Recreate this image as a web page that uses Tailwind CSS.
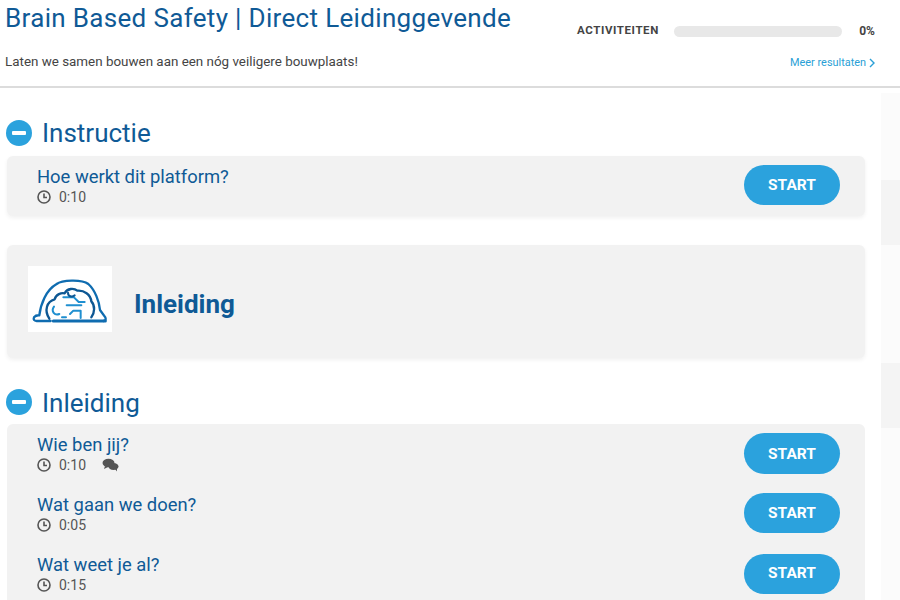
<!DOCTYPE html>
<html lang="nl">
<head>
    <meta charset="utf-8">
    <script src="https://cdn.jsdelivr.net/npm/@tailwindcss/browser@4"></script>
    <title>Brain Based Safety</title>
</head>
<body class="bg-white font-['Roboto',sans-serif] w-[900px] h-[600px] overflow-hidden">

    <!-- header -->
    <header class="h-[88px] flex justify-between border-b-2 border-[#dcdcdc] pl-[5px] pr-[25px]">
        <div>
            <h1 class="text-[26px] leading-[36px] text-[#0f5a96] tracking-[0.33px]">Brain Based Safety | Direct Leidinggevende</h1>
            <p class="mt-[17px] text-[13.4px] leading-[18px] text-[#444]">Laten we samen bouwen aan een nóg veiligere bouwplaats!</p>
        </div>
        <div class="w-[298px] pt-[24px]">
            <div class="flex items-center h-[14px]">
                <span class="text-[11.5px] font-bold text-[#444] w-[97px] tracking-[0.6px]">ACTIVITEITEN</span>
                <div class="w-[168px] h-[11px] rounded-full bg-[#e8e8e8]"></div>
                <span class="ml-auto text-[12px] font-bold text-[#444]">0%</span>
            </div>
            <a class="mt-[18px] flex items-center justify-end gap-[3px] text-[10.9px] leading-[14px] text-[#2a9fd6]">Meer resultaten
                <svg class="w-[6px] h-[10px]" viewBox="0 0 6 10" fill="none" stroke="#2a9fd6" stroke-width="1.4"><path d="M1 1l4 4-4 4"/></svg>
            </a>
        </div>
    </header>

    <div class="flex h-[512px]">
        <main class="w-[881px] pl-[7px] pr-[16px]">

            <!-- instructie -->
            <div class="mt-[30px] h-[30px] flex items-center gap-[10px]">
                <span class="-ml-[1px] w-[26px] h-[26px] rounded-full bg-[#2ba2dd] flex items-center justify-center"><span class="w-[14px] h-[4px] bg-white rounded-[1px]"></span></span>
                <h2 class="text-[26px] leading-[30px] text-[#0f5a96]">Instructie</h2>
            </div>
            <div class="mt-[8px] h-[60px] bg-[#f2f2f2] rounded-md shadow-[0_2px_4px_rgba(0,0,0,0.06)] flex items-center justify-between pl-[30px] pr-[25px]">
                <div>
                    <div class="text-[18.4px] leading-[21px] text-[#0f5a96]">Hoe werkt dit platform?</div>
                    <div class="mt-[1px] flex items-center gap-[8px] text-[14px] leading-[18px] text-[#555]">
                        <svg class="w-[14px] h-[14px]" viewBox="0 0 14 14" fill="none" stroke="#555" stroke-width="1.6"><circle cx="7" cy="7" r="6"/><path d="M7 3.5V7.5H10"/></svg>
                        <span>0:10</span>
                    </div>
                </div>
                <button class="-mt-[2px] pt-[2px] w-[96px] h-[40px] rounded-full bg-[#2ba2dd] text-white text-[15.5px] font-bold">START</button>
            </div>

            <!-- inleiding banner -->
            <div class="mt-[29px] h-[113px] bg-[#f2f2f2] rounded-md shadow-[0_2px_4px_rgba(0,0,0,0.06)] flex items-center pl-[21px] pb-[5px]">
                <div class="w-[84px] h-[66px] bg-white">
                    <svg class="w-[84px] h-[66px]" viewBox="24 18 252 198" fill="none" stroke-linecap="round" stroke-linejoin="round">
                        <path d="M92 183 H50 Q38 182 42 172 Q48 165 58 166 C62 132 78 90 110 72 C125 60 185 57 205 72 C225 90 238 125 240 150 L256 172 Q260 182 250 183" stroke="#0f6cb0" stroke-width="7"/>
                        <path d="M100 183 H256" stroke="#0f6cb0" stroke-width="9"/>
                        <path d="M88 176 C72 152 80 124 104 118 C108 102 124 98 134 100 C142 84 162 84 172 92 C192 90 212 104 214 124 C226 136 224 160 214 172" stroke="#0d5793" stroke-width="7"/>
                        <path d="M102 140 C92 154 104 168 118 162 M130 112 H162 L176 126 H194 M140 136 H184 M150 162 L160 152 H182 V174 M126 172 H138" stroke="#1f8fd0" stroke-width="6"/>
                        <path d="M144 98 C144 110 156 112 164 106" stroke="#0d5793" stroke-width="6"/>
                    </svg>
                </div>
                <h3 class="ml-[22px] mt-[11px] text-[26px] font-bold text-[#0f5a96]">Inleiding</h3>
            </div>

            <!-- inleiding lijst -->
            <div class="mt-[30px] h-[30px] flex items-center gap-[10px]">
                <span class="-ml-[1px] -mt-[2px] w-[26px] h-[26px] rounded-full bg-[#2ba2dd] flex items-center justify-center"><span class="w-[14px] h-[4px] bg-white rounded-[1px]"></span></span>
                <h2 class="text-[26px] leading-[30px] text-[#0f5a96]">Inleiding</h2>
            </div>
            <div class="mt-[6px] h-[176px] bg-[#f2f2f2] rounded-t-md pl-[30px] pr-[25px]">
                <div class="h-[60px] flex items-center justify-between">
                    <div>
                        <div class="text-[18.4px] leading-[21px] text-[#0f5a96]">Wie ben jij?</div>
                        <div class="mt-[1px] flex items-center gap-[8px] text-[14px] leading-[18px] text-[#555]">
                            <svg class="w-[14px] h-[14px]" viewBox="0 0 14 14" fill="none" stroke="#555" stroke-width="1.6"><circle cx="7" cy="7" r="6"/><path d="M7 3.5V7.5H10"/></svg>
                            <span>0:10</span>
                            <svg class="ml-[8px] w-[17px] h-[14px]" viewBox="0 0 17 14" fill="#555"><ellipse cx="6.5" cy="5" rx="6" ry="4.2"/><path d="M3 8l-1 3 4-2z"/><ellipse cx="11.5" cy="8.5" rx="5" ry="3.5"/><path d="M13 11l2 2.5 0-4z"/></svg>
                        </div>
                    </div>
                    <button class="-mt-[1px] pt-[2px] w-[96px] h-[41px] rounded-full bg-[#2ba2dd] text-white text-[15.5px] font-bold">START</button>
                </div>
                <div class="h-[60px] flex items-center justify-between">
                    <div>
                        <div class="text-[18.4px] leading-[21px] text-[#0f5a96]">Wat gaan we doen?</div>
                        <div class="mt-[1px] flex items-center gap-[8px] text-[14px] leading-[18px] text-[#555]">
                            <svg class="w-[14px] h-[14px]" viewBox="0 0 14 14" fill="none" stroke="#555" stroke-width="1.6"><circle cx="7" cy="7" r="6"/><path d="M7 3.5V7.5H10"/></svg>
                            <span>0:05</span>
                        </div>
                    </div>
                    <button class="-mt-[2px] pt-[2px] w-[96px] h-[40px] rounded-full bg-[#2ba2dd] text-white text-[15.5px] font-bold">START</button>
                </div>
                <div class="h-[60px] flex items-center justify-between">
                    <div>
                        <div class="text-[18.4px] leading-[21px] text-[#0f5a96]">Wat weet je al?</div>
                        <div class="mt-[1px] flex items-center gap-[8px] text-[14px] leading-[18px] text-[#555]">
                            <svg class="w-[14px] h-[14px]" viewBox="0 0 14 14" fill="none" stroke="#555" stroke-width="1.6"><circle cx="7" cy="7" r="6"/><path d="M7 3.5V7.5H10"/></svg>
                            <span>0:15</span>
                        </div>
                    </div>
                    <button class="-mt-[1px] w-[96px] h-[40px] rounded-full bg-[#2ba2dd] text-white text-[15.5px] font-bold">START</button>
                </div>
            </div>
        </main>

        <!-- rechter kolom -->
        <aside class="w-[19px] pt-[5px] flex flex-col">
            <div class="h-[87px] bg-[#fbfbfb]"></div>
            <div class="h-[65px] bg-[#f4f4f4]"></div>
            <div class="h-[118px] bg-[#fbfbfb]"></div>
            <div class="h-[65px] bg-[#f4f4f4]"></div>
            <div class="flex-1 bg-[#fbfbfb]"></div>
        </aside>
    </div>
</body>
</html>
